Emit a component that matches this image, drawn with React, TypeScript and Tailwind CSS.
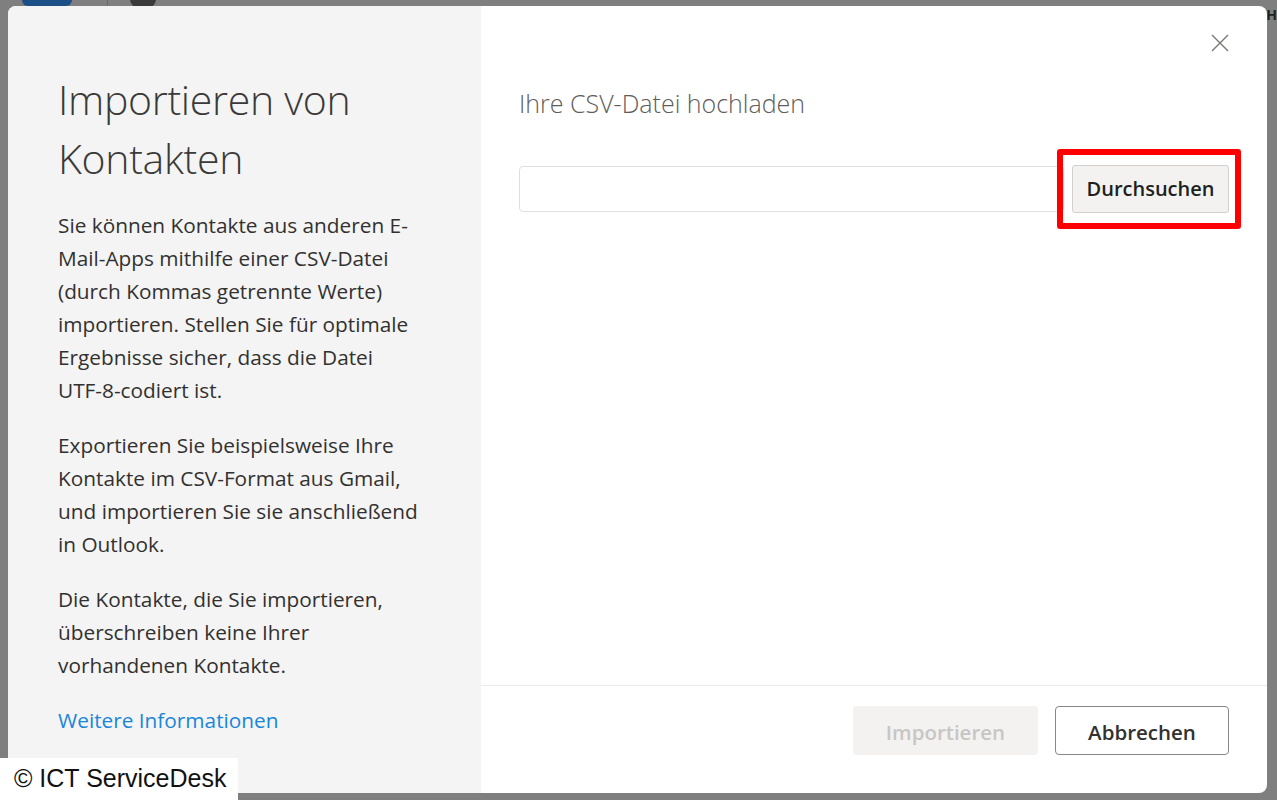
import React from 'react'

const body = "font-['Open_Sans',sans-serif]"

function CloseIcon() {
  return (
    <svg width="18" height="18" viewBox="0 0 18 18" fill="none" stroke="#7a7775" strokeWidth="1.4">
      <path d="M1 1 L17 17 M17 1 L1 17" />
    </svg>
  )
}

export default function App() {
  return (
    <div className="relative w-[1277px] h-[800px] overflow-hidden bg-[#7f7f7f]">
      {/* dimmed app behind the dialog */}
      <div className="absolute left-[22px] -top-[6px] w-[50px] h-[12px] rounded-md bg-[#1c4f86]" />
      <div className="absolute left-[107px] top-0 w-px h-[6px] bg-[#6a6a6a]" />
      <div className="absolute left-[130px] -top-[10px] w-[26px] h-[18px] rounded-full bg-[#3a3a3a]" />
      <div className="absolute right-0 top-[8px] text-[14px] font-bold text-[#222] leading-none">H</div>

      {/* dialog */}
      <div className="relative pl-[8px] pt-[6px] pr-[10px] pb-[7px] h-full">
        <div className="flex h-full rounded-lg overflow-hidden bg-white">
          {/* left panel */}
          <div className={`w-[473px] shrink-0 bg-[#f4f4f4] pl-[50px] pr-[62px] pt-[64px] text-[#323130] ${body}`}>
            <h1 className="text-[41px] leading-[59px] font-light text-[#3b3a39] tracking-[-0.3px]">
              Importieren von Kontakten
            </h1>
            <div className="mt-[21px] text-[20.8px] leading-[33px]">
              <p>
                Sie können Kontakte aus anderen E-Mail-Apps mithilfe einer CSV-Datei (durch Kommas getrennte Werte)
                importieren. Stellen Sie für optimale Ergebnisse sicher, dass die Datei UTF-8-codiert ist.
              </p>
              <p className="mt-[22px]">
                Exportieren Sie beispielsweise Ihre Kontakte im CSV-Format aus Gmail, und importieren Sie sie
                anschließend in Outlook.
              </p>
              <p className="mt-[22px]">
                Die Kontakte, die Sie importieren, überschreiben keine Ihrer vorhandenen Kontakte.
              </p>
              <p className="mt-[22px] text-[#1a86d9]">Weitere Informationen</p>
            </div>
          </div>

          {/* right panel */}
          <div className={`flex-1 flex flex-col ${body}`}>
            <div className="flex-1 px-[38px]">
              <div className="flex justify-end pt-[28px]">
                <CloseIcon />
              </div>
              <h2 className="mt-[35px] text-[25px] font-light text-[#5f5d5b] leading-[32px]">
                Ihre CSV-Datei hochladen
              </h2>
              <div className="mt-[46px] flex items-center gap-[8px]">
                <div className="flex-1 h-[46px] rounded-[4px] border border-[#e1dfdd] bg-white" />
                <div className="relative">
                  <button className="h-[48px] w-[157px] rounded-[3px] border border-[#d2d0ce] bg-[#f3f2f1] text-[20px] font-semibold text-[#201f1e]">
                    Durchsuchen
                  </button>
                  {/* red highlight annotation */}
                  <span className="pointer-events-none absolute -left-[15px] -right-[12px] -top-[16px] -bottom-[16px] rounded-[3px] border-[6px] border-[#ff0000]" />
                </div>
              </div>
            </div>
            <div className="border-t border-[#edebe9] h-[108px] flex items-start justify-end gap-[17px] pr-[38px] pt-[20px]">
              <button className="h-[49px] w-[185px] rounded-[4px] bg-[#f3f2f1] pt-[3px] text-[20.5px] font-semibold text-[#c8c6c4]">
                Importieren
              </button>
              <button className="h-[49px] w-[174px] rounded-[4px] border border-[#8a8886] bg-white pt-[3px] text-[20.5px] font-semibold text-[#323130]">
                Abbrechen
              </button>
            </div>
          </div>
        </div>
      </div>

      {/* watermark */}
      <div className="absolute left-0 bottom-0 w-[238px] h-[42px] bg-white pl-[14px] flex items-center font-['Liberation_Sans',sans-serif] text-[25px] text-[#111]">
        © ICT ServiceDesk
      </div>
    </div>
  )
}
